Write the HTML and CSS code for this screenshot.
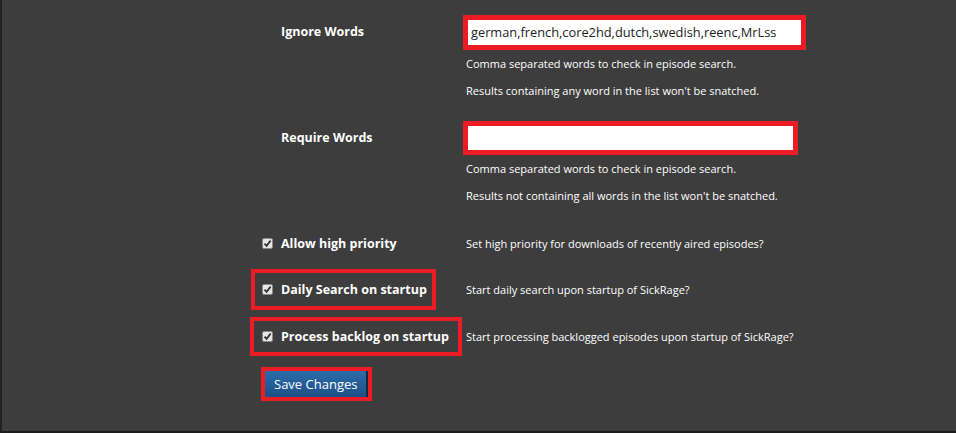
FILE: index.html
```html
<!DOCTYPE html>
<html lang="en">
<head>
    <meta charset="UTF-8">
    <title>Search Settings</title>
    <link rel="stylesheet" href="styles.css">
</head>
<body>
    <div class="pagina">
        <div class="campo">
            <div class="rotulo texto">Ignore Words</div>
            <div class="valor">
                <input type="text" class="entrada" value="german,french,core2hd,dutch,swedish,reenc,MrLss">
                <div class="ajuda">Comma separated words to check in episode search.</div>
                <div class="ajuda">Results containing any word in the list won't be snatched.</div>
            </div>
        </div>

        <div class="campo ultimo">
            <div class="rotulo texto">Require Words</div>
            <div class="valor">
                <input type="text" class="entrada curta" value="">
                <div class="ajuda">Comma separated words to check in episode search.</div>
                <div class="ajuda">Results not containing all words in the list won't be snatched.</div>
            </div>
        </div>

        <div class="opcao">
            <label class="rotulo caixa">
                <span class="check"><svg width="9" height="9" viewBox="0 0 9 9"><path d="M1.5 4.6 L3.6 6.8 L7.6 1.6" fill="none" stroke="#333" stroke-width="1.8"/></svg></span>
                Allow high priority
            </label>
            <div class="descricao">Set high priority for downloads of recently aired episodes?</div>
        </div>

        <div class="opcao">
            <label class="rotulo caixa marcado diario">
                <span class="check"><svg width="9" height="9" viewBox="0 0 9 9"><path d="M1.5 4.6 L3.6 6.8 L7.6 1.6" fill="none" stroke="#333" stroke-width="1.8"/></svg></span>
                Daily Search on startup
            </label>
            <div class="descricao">Start daily search upon startup of SickRage?</div>
        </div>

        <div class="opcao">
            <label class="rotulo caixa marcado backlog">
                <span class="check"><svg width="9" height="9" viewBox="0 0 9 9"><path d="M1.5 4.6 L3.6 6.8 L7.6 1.6" fill="none" stroke="#333" stroke-width="1.8"/></svg></span>
                Process backlog on startup
            </label>
            <div class="descricao">Start processing backlogged episodes upon startup of SickRage?</div>
        </div>

        <div class="acoes">
            <span class="moldura"><button class="botao">Save Changes</button></span>
        </div>
    </div>
</body>
</html>
```

FILE: styles.css
```css
:root {
    --fundo: #3d3d3d;
    --vermelho: #ed1c24;
    --texto: #ffffff;
}

body {
    margin: 0;
    background: var(--fundo);
    font-family: "Open Sans", "Liberation Sans", sans-serif;
    color: var(--texto);
}

.pagina {
    height: 433px;
    box-sizing: border-box;
    border-left: 2px solid #222;
    border-bottom: 2px solid #1c1c1c;
    padding: 15px 0 0 260px;
}

.campo,
.opcao {
    display: grid;
    grid-template-columns: 204px 1fr;
}

.campo {
    height: 106px;
}

.campo.ultimo {
    height: 99px;
}

.rotulo {
    font-size: 12.5px;
    font-weight: bold;
}

.texto {
    padding: 8px 0 0 19px;
}

.entrada {
    display: block;
    width: 343px;
    height: 35px;
    box-sizing: border-box;
    margin: 0 0 0 -3px;
    border: 5px solid var(--vermelho);
    padding: 0 3px 2px;
    background: #fff;
    font-family: "Open Sans", "Liberation Sans", sans-serif;
    font-size: 12.8px;
    color: #222;
    outline: none;
}

.entrada.curta {
    width: 335px;
    height: 34px;
}

.ajuda {
    font-size: 11px;
    line-height: 27px;
}

.opcao {
    align-items: center;
    height: 46.5px;
}

.descricao {
    font-size: 11px;
}

.caixa {
    display: flex;
    align-items: center;
    gap: 8px;
    width: max-content;
}

.check {
    display: inline-flex;
    align-items: center;
    justify-content: center;
    width: 11px;
    height: 11px;
    box-sizing: border-box;
    background: #e6e6e6;
    border: 1px solid #8a8a8a;
    border-radius: 2px;
}

/* molduras vermelhas de destaque */
.marcado {
    border: 4px solid var(--vermelho);
}

.diario {
    margin-left: -11px;
    padding: 8px 5px 8px 7px;
}

.backlog {
    margin-left: -12px;
    padding: 7px 9px 7px 8px;
}

.acoes {
    padding: 7px 0 0 0;
}

.moldura {
    display: inline-block;
    margin-left: -1px;
    border: 4px solid var(--vermelho);
}

.botao {
    display: block;
    height: 26px;
    padding: 0 9px 0 9px;
    border: none;
    border-right: 2px solid #0f2a45;
    background: linear-gradient(#2b6cab, #1d5086);
    color: #fff;
    font-family: "Open Sans", "Liberation Sans", sans-serif;
    font-size: 13px;
}
```
